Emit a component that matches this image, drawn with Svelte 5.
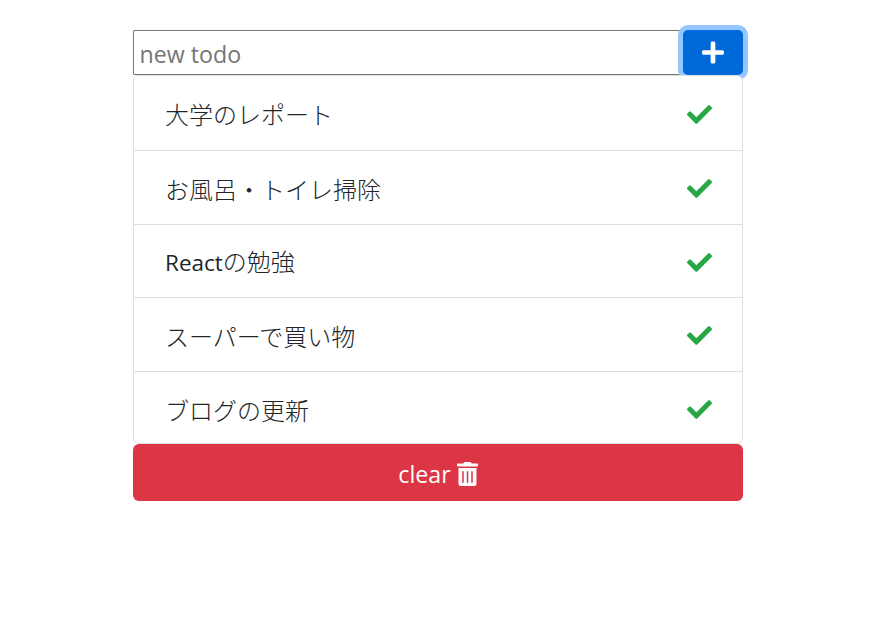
<script>
  const todos = ['大学のレポート', 'お風呂・トイレ掃除', 'Reactの勉強', 'スーパーで買い物', 'ブログの更新'];
  const segments = todos.map((todo) => todo.split(/(React)/).filter(Boolean));
  let value = $state('');
</script>

<main>
  <form onsubmit={(e) => e.preventDefault()}>
    <input type="text" placeholder="new todo" bind:value />
    <button class="add" aria-label="add">
      <svg width="21" height="24" viewBox="0 0 448 512"><path d="M416 208H272V64c0-17.67-14.33-32-32-32h-32c-17.67 0-32 14.33-32 32v144H32c-17.67 0-32 14.33-32 32v32c0 17.67 14.33 32 32 32h144v144c0 17.67 14.33 32 32 32h32c17.67 0 32-14.33 32-32V304h144c17.67 0 32-14.33 32-32v-32c0-17.67-14.33-32-32-32z" /></svg>
    </button>
  </form>
  <ul>
    {#each segments as parts}
      <li>
        <span class="label">{#each parts as part}<span class:latin={part === 'React'}>{part}</span>{/each}</span>
        <svg width="25" height="25" viewBox="0 0 512 512"><path d="M173.898 439.404l-166.4-166.4c-9.997-9.997-9.997-26.206 0-36.204l36.203-36.204c9.997-9.998 26.207-9.998 36.204 0L192 312.69 432.095 72.596c9.997-9.997 26.207-9.997 36.204 0l36.203 36.204c9.997 9.997 9.997 26.206 0 36.204l-294.4 294.401c-9.998 9.997-26.207 9.997-36.204-.001z" /></svg>
      </li>
    {/each}
  </ul>
  <button class="clear">
    <span>clear</span>
    <svg width="21" height="24" viewBox="0 0 448 512"><path d="M32 464a48 48 0 0 0 48 48h288a48 48 0 0 0 48-48V128H32zm272-256a16 16 0 0 1 32 0v224a16 16 0 0 1-32 0zm-96 0a16 16 0 0 1 32 0v224a16 16 0 0 1-32 0zm-96 0a16 16 0 0 1 32 0v224a16 16 0 0 1-32 0zM432 32H312l-9.4-18.7A24 24 0 0 0 281.1 0H166.8a23.72 23.72 0 0 0-21.4 13.3L136 32H16A16 16 0 0 0 0 48v32a16 16 0 0 0 16 16h416a16 16 0 0 0 16-16V48a16 16 0 0 0-16-16z" /></svg>
  </button>
</main>

<style>
  :global(body) {
    background: #fff;
    color: #212529;
  }
  main {
    box-sizing: border-box;
    width: 610px;
    margin-left: 133px;
    padding-top: 30px;
    font: 24px/36px 'Open Sans', 'Noto Sans', 'Noto Sans CJK JP', sans-serif;
  }
  svg {
    display: block;
    fill: currentColor;
    flex: none;
  }
  form {
    display: flex;
    height: 45px;
  }
  input {
    box-sizing: border-box;
    flex: 1;
    min-width: 0;
    margin: 0;
    padding: 3px 5px 0 5.5px;
    border: 1px solid #767676;
    border-right: 0;
    border-radius: 2px 0 0 2px;
    background: #fff;
    font: 23.2px 'Open Sans', 'Noto Sans', sans-serif;
    outline: 0;
  }
  input::placeholder {
    color: #757575;
    opacity: 1;
  }
  button {
    display: flex;
    align-items: center;
    justify-content: center;
    border: 0;
    margin: 0;
    padding: 0;
    color: #fff;
    font: inherit;
    border-radius: 6px;
  }
  .add {
    width: 60px;
    background: #0069d9;
    box-shadow: 0 0 0 5px #94c7ff;
    border-radius: 5px;
  }
  .add svg {
    width: 22px;
    height: 25px;
  }
  ul {
    box-sizing: border-box;
    height: 369px;
    margin: 0;
    padding: 0;
    display: grid;
    grid-template-rows: 75px 74px 73px 74px 73px;
    list-style: none;
    border: 1px solid #dfdfdf;
    border-radius: 6px;
    background: #fff;
    position: relative;
    overflow: hidden;
  }
  li {
    box-sizing: border-box;
    display: flex;
    align-items: center;
    justify-content: space-between;
    padding: 2px 30px 0 31px;
    border-bottom: 1px solid #dfdfdf;
  }
  li:last-child {
    border-bottom: 0;
  }
  li svg {
    color: #28a745;
  }
  .label {
    font-family: 'Noto Sans CJK JP', sans-serif;
    font-weight: 300;
    white-space: nowrap;
  }
  .latin {
    font-family: 'Open Sans', 'Noto Sans', sans-serif;
    font-size: 22.5px;
    font-weight: 400;
  }
  .clear {
    width: 100%;
    height: 57px;
    gap: 6px;
    padding-top: 3px;
    background: #dc3545;
  }
  .clear span {
    font-size: 23.2px;
  }
</style>
